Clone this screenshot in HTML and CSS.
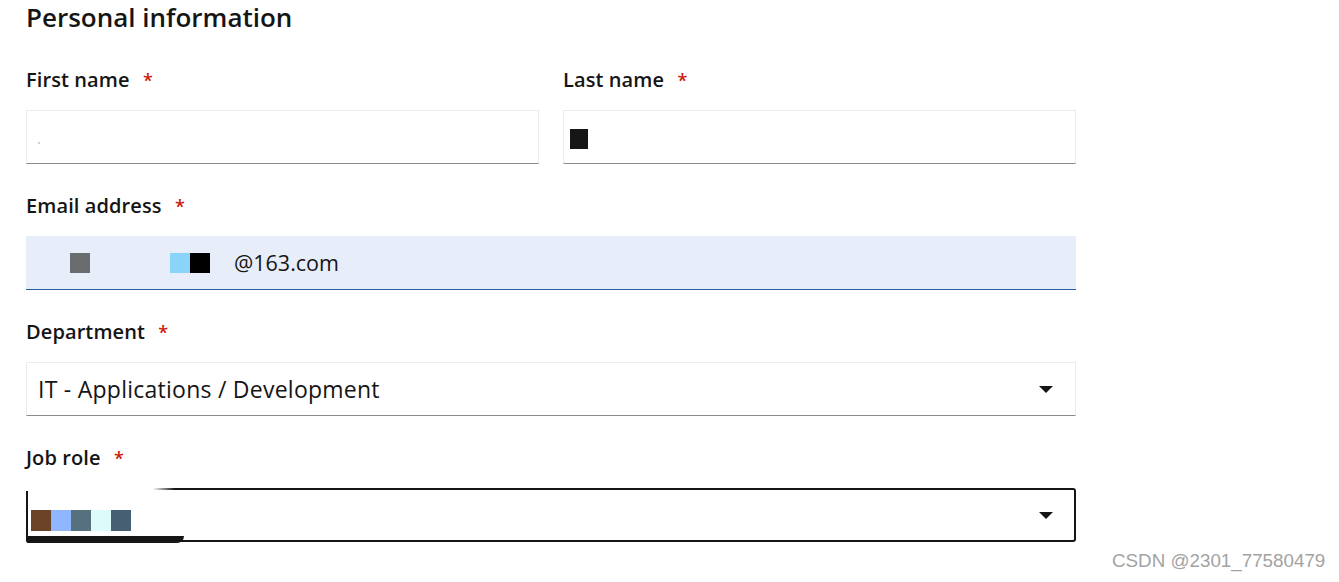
FILE: index.html
```html
<!DOCTYPE html>
<html>
<head>
<meta charset="utf-8">
<link rel="stylesheet" href="styles.css">
</head>
<body>
<div class="page">
  <h2 class="title">Personal information</h2>
  <div class="row">
    <div class="field">
      <label class="label">First name <span class="req">*</span></label>
      <div class="input"><span class="dot"></span></div>
    </div>
    <div class="field">
      <label class="label">Last name <span class="req">*</span></label>
      <div class="input"><span class="blk blk-dark"></span></div>
    </div>
  </div>
  <div class="field">
    <label class="label">Email address <span class="req">*</span></label>
    <div class="input input-email">
      <span class="blk blk-gray"></span>
      <span class="blk blk-sky"></span><span class="blk blk-black"></span>
      <span class="email-text">@163.com</span>
    </div>
  </div>
  <div class="field">
    <label class="label">Department <span class="req">*</span></label>
    <div class="input select">
      <span class="value">IT - Applications / Development</span>
      <span class="caret"></span>
    </div>
  </div>
  <div class="field">
    <label class="label">Job role <span class="req">*</span></label>
    <div class="input select select-focus">
      <span class="mosaic">
        <span class="m m1"></span><span class="m m2"></span><span class="m m3"></span><span class="m m4"></span><span class="m m5"></span>
      </span>
      <span class="caret"></span>
      <span class="cover-top"></span>
      <span class="smear"></span>
    </div>
  </div>
</div>
<div class="watermark">CSDN @2301_77580479</div>
</body>
</html>
```
FILE: styles.css
```css
html, body {
  margin: 0;
  padding: 0;
  background: #ffffff;
}
body {
  font-family: "Open Sans", "Noto Sans", sans-serif;
  color: #151515;
  width: 1339px;
  height: 582px;
  overflow: hidden;
  position: relative;
}
.page {
  width: 1050px;
  padding: 0 0 0 26px;
  display: flex;
  flex-direction: column;
}
.title {
  margin: 0;
  font-size: 26px;
  font-weight: 600;
  line-height: 34px;
  height: 34px;
}
.row {
  display: flex;
  gap: 24px;
  margin-top: 32px;
}
.row .field {
  flex: 1;
  margin-top: 0;
}
.field {
  display: flex;
  flex-direction: column;
  margin-top: 28px;
}
.label {
  font-size: 20px;
  font-weight: 600;
  line-height: 28px;
  height: 28px;
  margin-bottom: 16px;
  letter-spacing: 0.1px;
}
.req {
  color: #c9190b;
  font-size: 18px;
  margin-left: 8px;
}
.input {
  box-sizing: border-box;
  height: 54px;
  border: 1px solid #ececec;
  border-bottom: 1px solid #8a8d90;
  display: flex;
  align-items: center;
  padding: 0 11px;
  position: relative;
  background: #fff;
}
.dot {
  width: 2px;
  height: 2px;
  background: #d0d0d0;
  margin-top: 12px;
}
.blk {
  display: inline-block;
  width: 20px;
  height: 20px;
}
.blk-dark {
  width: 18px;
  background: #161616;
  margin-left: -5px;
  margin-top: 4px;
}
.input-email {
  background: #e7eefa;
  border: none;
  border-bottom: 1px solid #2b5ea8;
}
.blk-gray {
  background: #6a6d70;
  margin-left: 33px;
}
.blk-sky {
  background: #8ad4fb;
  margin-left: 80px;
}
.blk-black {
  background: #000;
}
.email-text {
  font-size: 21.5px;
  margin-left: 24px;
}
.select {
  justify-content: space-between;
  padding-right: 22px;
}
.value {
  font-size: 23px;
  letter-spacing: 0.25px;
}
.caret {
  width: 0;
  height: 0;
  border-left: 7px solid transparent;
  border-right: 7px solid transparent;
  border-top: 7px solid #151515;
}
.select-focus {
  border: 2px solid #151515;
  border-radius: 3px;
  padding-right: 21px;
  padding-left: 3px;
}
.mosaic {
  display: flex;
  margin-top: 10px;
}
.m {
  width: 20px;
  height: 21px;
}
.m1 { background: #6b4327; }
.m2 { background: #8fb6ff; }
.m3 { background: #56707e; }
.m4 { background: #ddfbfb; }
.m5 { background: #465f72; }
.cover-top {
  position: absolute;
  left: -3px;
  top: -3px;
  width: 150px;
  height: 4px;
  background: linear-gradient(90deg, #fff 85%, rgba(255,255,255,0));
}
.smear {
  position: absolute;
  left: -2px;
  bottom: -3px;
  width: 158px;
  height: 7px;
  background: #151515;
  border-radius: 0 0 10px 4px;
}
.watermark {
  position: absolute;
  left: 1112px;
  top: 550px;
  font-family: "Liberation Sans", Arial, sans-serif;
  font-size: 18.8px;
  color: #a3a3a3;
}
```
